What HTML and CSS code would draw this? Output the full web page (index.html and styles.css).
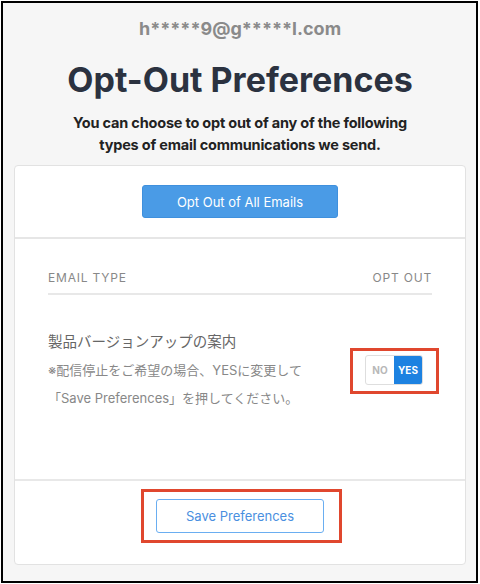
FILE: index.html
```html
<!DOCTYPE html>
<html lang="ja">
<head>
    <meta charset="UTF-8">
    <meta name="viewport" content="width=device-width, initial-scale=1.0">
    <title>Opt-Out Preferences</title>
    <link rel="stylesheet" href="styles.css">
</head>
<body>
    <div class="frame">
        <div class="intro">
            <div class="email">h*****9@g*****l.com</div>
            <h1>Opt-Out Preferences</h1>
            <p class="lead">You can choose to opt out of any of the following<br>types of email communications we send.</p>
        </div>

        <div class="card">
            <div class="card-top">
                <button class="btn-all" type="button">Opt Out of All Emails</button>
            </div>

            <div class="card-body">
                <div class="list-head">
                    <span>EMAIL TYPE</span>
                    <span>OPT OUT</span>
                </div>
                <div class="item">
                    <div class="item-text">
                        <div class="item-title">製品バージョンアップの案内</div>
                        <div class="item-note">※配信停止をご希望の場合、YESに変更して<br>「Save Preferences」を押してください。</div>
                    </div>
                    <div class="toggle marked">
                        <span class="opt no">NO</span>
                        <span class="opt yes">YES</span>
                    </div>
                </div>
            </div>

            <div class="card-foot">
                <button class="btn-save marked" type="button">Save Preferences</button>
            </div>
        </div>
    </div>
</body>
</html>
```

FILE: styles.css
```css
* {
    margin: 0;
    padding: 0;
    box-sizing: border-box;
    font-family: 'Inter', 'Noto Sans CJK JP', sans-serif;
}

body {
    background: #fff;
}

.frame {
    margin: 1px 0 0 1px;
    width: 477px;
    height: 582px;
    border: 2px solid #000;
    background: #f6f6f6;
    padding: 0 10px 0 11px;
}

.intro {
    text-align: center;
    padding-top: 14px;
}

.email {
    font-size: 18px;
    line-height: 24px;
    font-weight: 700;
    color: #8a8a8a;
}

h1 {
    margin-top: 19px;
    font-size: 34px;
    line-height: 40px;
    font-weight: 700;
    color: #2b3240;
}

.lead {
    margin-top: 12px;
    white-space: nowrap;
    font-size: 14.5px;
    line-height: 22px;
    font-weight: 700;
    letter-spacing: -0.2px;
    color: #222;
}

.card {
    margin-top: 9px;
    background: #fff;
    border: 1px solid #e2e2e2;
    border-radius: 4px;
}

.card-top {
    padding: 19px 0;
    text-align: center;
    border-bottom: 2px solid #e6e6e6;
}

.btn-all {
    width: 196px;
    height: 33px;
    background: #4a9be6;
    border: 1px solid #3f90dd;
    border-radius: 3px;
    color: #fff;
    font-size: 13px;
}

.card-body {
    padding: 31px 33px 67px;
    border-bottom: 2px solid #e8e8e8;
}

.list-head {
    display: flex;
    justify-content: space-between;
    padding-bottom: 7px;
    border-bottom: 2px solid #e8e8e8;
    font-size: 12px;
    line-height: 16px;
    letter-spacing: 0.8px;
    color: #888;
}

.item {
    display: flex;
    justify-content: space-between;
    align-items: center;
    padding-top: 36px;
}

.item-title {
    font-size: 14.5px;
    line-height: 22px;
    color: #666;
}

.item-note {
    margin-top: 3px;
    font-size: 13px;
    line-height: 28px;
    color: #888;
}

.toggle {
    position: relative;
    display: flex;
    width: 58px;
    height: 30px;
    margin: 0 9px 4px 0;
    border: 1px solid #dedede;
    border-radius: 3px;
    font-size: 10px;
    font-weight: 700;
}

.opt {
    flex: 1;
    display: flex;
    align-items: center;
    justify-content: center;
}

.no {
    color: #b8b8b8;
}

.yes {
    background: #1d82e1;
    color: #fff;
    border-radius: 0 2px 2px 0;
}

.card-foot {
    padding: 18px 0 31px;
    text-align: center;
}

.btn-save {
    position: relative;
    width: 168px;
    height: 34px;
    background: #fff;
    border: 1px solid #6aaef1;
    border-radius: 3px;
    color: #4a8fe0;
    font-size: 13px;
}

/* red annotation boxes drawn over the screenshot */
.marked::after {
    content: '';
    position: absolute;
    border: 3px solid #e0472e;
    pointer-events: none;
}

.toggle.marked::after {
    top: -8px;
    bottom: -10px;
    left: -16px;
    right: -17px;
}

.btn-save.marked::after {
    top: -11px;
    bottom: -11px;
    left: -16px;
    right: -19px;
}
```
